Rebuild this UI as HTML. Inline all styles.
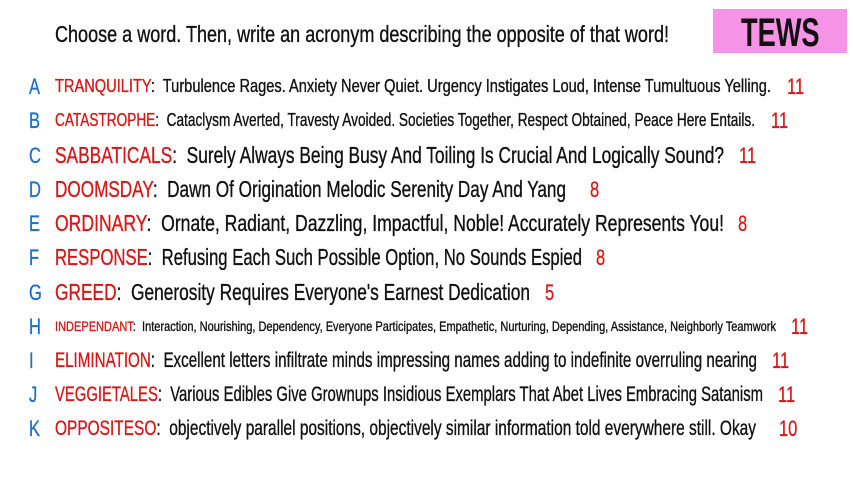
<!DOCTYPE html>
<html><head><meta charset="utf-8"><style>
html,body{margin:0;padding:0;background:#fff;}
body{width:853px;height:480px;position:relative;overflow:hidden;font-family:"Liberation Sans Narrow","Liberation Sans",sans-serif;color:#111;}
.l{position:absolute;white-space:nowrap;transform-origin:0 50%;line-height:1;-webkit-text-stroke:0.35px currentColor;}
.l .r{-webkit-text-stroke:0.35px #d81818;}
.k{position:absolute;left:29px;color:#1a6fd0;font-size:22px;line-height:1;transform:scaleX(0.75);transform-origin:0 50%;-webkit-text-stroke:0.3px #1a6fd0;}
.n{position:absolute;color:#d81818;font-size:22px;line-height:1;transform:scaleX(0.75);transform-origin:0 50%;-webkit-text-stroke:0.3px #d81818;}
.r{color:#d81818;}
#tews{position:absolute;left:713px;top:9px;width:134px;height:44px;background:#f593e6;}
#tews span{position:absolute;left:28px;top:2px;font-size:40px;font-weight:bold;color:#111;line-height:44px;transform:scaleX(0.68);transform-origin:0 50%;}
</style></head><body>
<div id="tews"><span>TEWS</span></div>
<div class="l" data-w="614" style="left:55px;top:23px;font-size:23px">Choose a word. Then, write an acronym describing the opposite of that word!</div>

<div class="k" style="top:76px">A</div>
<div class="l" data-w="716" style="left:55px;top:77px;font-size:18px"><span class="r">TRANQUILITY</span>:&nbsp; Turbulence Rages. Anxiety Never Quiet. Urgency Instigates Loud, Intense Tumultuous Yelling.</div>
<div class="n" style="left:787px;top:76px">11</div>

<div class="k" style="top:110px">B</div>
<div class="l" data-w="700" style="left:55px;top:111px;font-size:18px"><span class="r">CATASTROPHE</span>:&nbsp; Cataclysm Averted, Travesty Avoided. Societies Together, Respect Obtained, Peace Here Entails.</div>
<div class="n" style="left:771px;top:110px">11</div>

<div class="k" style="top:145px">C</div>
<div class="l" data-w="669" style="left:55px;top:144px;font-size:23px"><span class="r">SABBATICALS</span>:&nbsp; Surely Always Being Busy And Toiling Is Crucial And Logically Sound?</div>
<div class="n" style="left:739px;top:145px">11</div>

<div class="k" style="top:179px">D</div>
<div class="l" data-w="511" style="left:55px;top:178px;font-size:23px"><span class="r">DOOMSDAY</span>:&nbsp; Dawn Of Origination Melodic Serenity Day And Yang</div>
<div class="n" style="left:590px;top:179px">8</div>

<div class="k" style="top:213px">E</div>
<div class="l" data-w="669" style="left:55px;top:212px;font-size:23px"><span class="r">ORDINARY</span>:&nbsp; Ornate, Radiant, Dazzling, Impactful, Noble! Accurately Represents You!</div>
<div class="n" style="left:738px;top:213px">8</div>

<div class="k" style="top:247px">F</div>
<div class="l" data-w="527" style="left:55px;top:246px;font-size:23px"><span class="r">RESPONSE</span>:&nbsp; Refusing Each Such Possible Option, No Sounds Espied</div>
<div class="n" style="left:596px;top:247px">8</div>

<div class="k" style="top:282px">G</div>
<div class="l" data-w="475" style="left:55px;top:281px;font-size:23px"><span class="r">GREED</span>:&nbsp; Generosity Requires Everyone's Earnest Dedication</div>
<div class="n" style="left:545px;top:282px">5</div>

<div class="k" style="top:316px">H</div>
<div class="l" data-w="721" style="left:55px;top:319px;font-size:14px"><span class="r">INDEPENDANT</span>:&nbsp; Interaction, Nourishing, Dependency, Everyone Participates, Empathetic, Nurturing, Depending, Assistance, Neighborly Teamwork</div>
<div class="n" style="left:791px;top:316px">11</div>

<div class="k" style="top:350px">I</div>
<div class="l" data-w="702" style="left:55px;top:350px;font-size:21px"><span class="r">ELIMINATION</span>:&nbsp; Excellent letters infiltrate minds impressing names adding to indefinite overruling nearing</div>
<div class="n" style="left:772px;top:350px">11</div>

<div class="k" style="top:384px">J</div>
<div class="l" data-w="708" style="left:55px;top:384px;font-size:21px"><span class="r">VEGGIETALES</span>:&nbsp; Various Edibles Give Grownups Insidious Exemplars That Abet Lives Embracing Satanism</div>
<div class="n" style="left:778px;top:384px">11</div>

<div class="k" style="top:418px">K</div>
<div class="l" data-w="701" style="left:55px;top:418px;font-size:21px"><span class="r">OPPOSITESO</span>:&nbsp; objectively parallel positions, objectively similar information told everywhere still. Okay</div>
<div class="n" style="left:779px;top:418px">10</div>

<script>
document.querySelectorAll('.l').forEach(function(e){
  var w=e.getBoundingClientRect().width, t=+e.dataset.w;
  if(w>0&&t) e.style.transform='scaleX('+(t/w)+')';
});
</script>
</body></html>
